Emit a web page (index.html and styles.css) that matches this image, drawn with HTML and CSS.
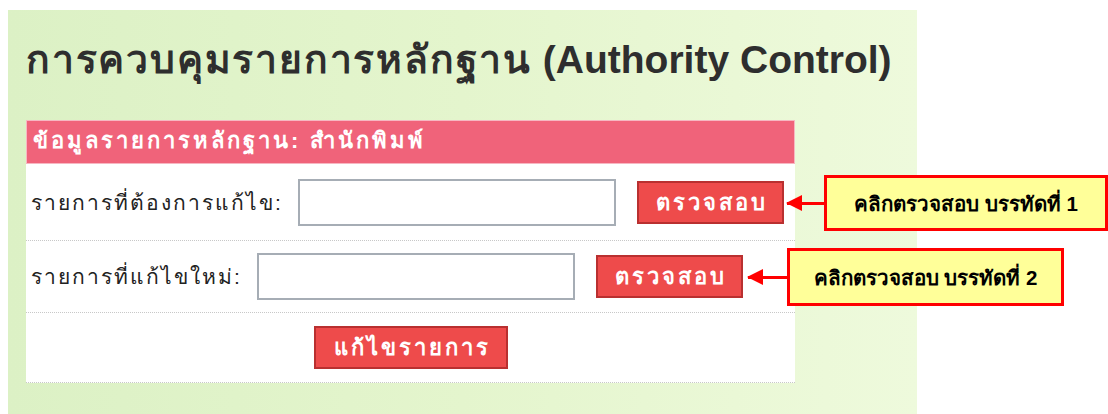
FILE: index.html
```html
<!DOCTYPE html>
<html lang="th">
<head>
<meta charset="utf-8">
<title>การควบคุมรายการหลักฐาน</title>
<link rel="stylesheet" href="styles.css">
</head>
<body>
<div class="panel">
  <h1 class="title"><span class="title-th">การควบคุมรายการหลักฐาน</span> (Authority Control)</h1>
  <div class="card">
    <div class="card-head">ข้อมูลรายการหลักฐาน: สำนักพิมพ์</div>
    <div class="row row-first">
      <label class="label">รายการที่ต้องการแก้ไข:</label>
      <input class="field" type="text">
      <button class="btn btn-check">ตรวจสอบ</button>
    </div>
    <div class="row row-second">
      <label class="label">รายการที่แก้ไขใหม่:</label>
      <input class="field" type="text">
      <button class="btn btn-check">ตรวจสอบ</button>
    </div>
    <div class="row row-submit">
      <button class="btn btn-submit">แก้ไขรายการ</button>
    </div>
  </div>
</div>

<div class="note note-one">คลิกตรวจสอบ บรรทัดที่ 1</div>
<div class="pointer pointer-one"></div>
<div class="note note-two">คลิกตรวจสอบ บรรทัดที่ 2</div>
<div class="pointer pointer-two"></div>
</body>
</html>
```

FILE: styles.css
```css
html, body {
  margin: 0;
  padding: 0;
  background: #ffffff;
}

body {
  position: relative;
  width: 1108px;
  height: 414px;
  overflow: hidden;
  font-family: "Liberation Sans", Arial, sans-serif;
}

.panel {
  margin: 10px 0 0 8px;
  width: 909px;
  height: 404px;
  box-sizing: border-box;
  padding: 26px 0 0 18px;
  background: linear-gradient(to right, #dcf1c5 0%, #e4f5cd 50%, #eefadc 100%);
}

.title {
  margin: 0;
  font-size: 39px;
  line-height: 48px;
  font-weight: bold;
  color: #2e2e2e;
  white-space: nowrap;
}

.title-th {
  letter-spacing: 1.8px;
}

.card {
  margin-top: 36px;
  width: 769px;
  background: #ffffff;
}

.card-head {
  height: 44px;
  box-sizing: border-box;
  border: 1px solid #f7b7c2;
  background: #f0637a;
  color: #ffffff;
  font-weight: bold;
  font-size: 22px;
  letter-spacing: 3px;
  line-height: 40px;
  padding-left: 6px;
}

.row {
  display: flex;
  align-items: center;
  border-bottom: 1px dotted #c8c8c8;
}

.row-first {
  padding: 15px 0 14px 5px;
}

.row-second {
  padding: 12px 0 12px 5px;
}

.row-submit {
  justify-content: center;
  padding: 13px 0 13px 0;
}

.label {
  font-size: 21px;
  letter-spacing: 2px;
  color: #222222;
  margin-right: 15px;
}

.field {
  width: 318px;
  height: 47px;
  box-sizing: border-box;
  border: 2px solid #a6adb5;
  background: #ffffff;
  margin: 0 21px 0 0;
  padding: 0 6px;
  font-size: 18px;
}

.btn {
  height: 43px;
  box-sizing: border-box;
  border: 2px solid #b93030;
  background: #ee4b4b;
  color: #ffffff;
  font-family: inherit;
  font-weight: bold;
  font-size: 22px;
  letter-spacing: 3px;
  padding: 0 0 0 3px;
  cursor: pointer;
}

.btn-check {
  width: 147px;
}

.btn-submit {
  width: 194px;
}

/* callouts laid over the form */
.note {
  position: absolute;
  box-sizing: border-box;
  border: 3px solid #ff0000;
  background: #ffff99;
  color: #000000;
  font-weight: bold;
  font-size: 20.5px;
  display: flex;
  align-items: center;
  justify-content: center;
}

.note-one {
  left: 824px;
  top: 175px;
  width: 284px;
  height: 56px;
}

.note-two {
  left: 787px;
  top: 248px;
  width: 277px;
  height: 58px;
}

.pointer {
  position: absolute;
  height: 3px;
  background: #ff0000;
}

.pointer::before {
  content: "";
  position: absolute;
  left: -1px;
  top: -7px;
  border-top: 8px solid transparent;
  border-bottom: 8px solid transparent;
  border-right: 16px solid #ff0000;
}

.pointer-one {
  left: 787px;
  top: 202px;
  width: 37px;
}

.pointer-two {
  left: 748px;
  top: 276px;
  width: 39px;
}
```
